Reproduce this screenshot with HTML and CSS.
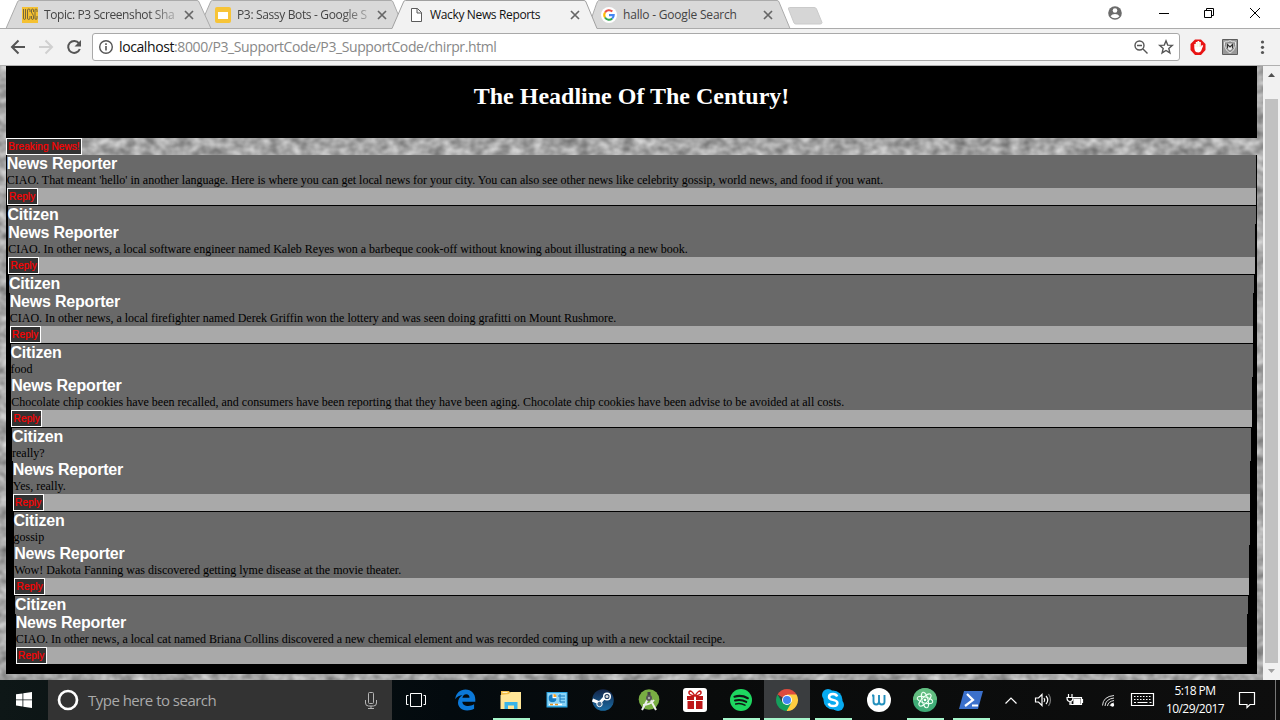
FILE: index.html
```html
<!DOCTYPE html>
<html lang="en">
<head>
<meta charset="utf-8">
<title>Wacky News Reports</title>
<link rel="stylesheet" href="styles.css">
</head>
<body>
<div class="screen">
  <header class="tabstrip">
    <svg class="tab-shapes" width="1280" height="29" viewBox="0 0 1280 29">
      <path d="M0 28.5H1280" stroke="#ababab"/>
      <path d="M585 28.5C590 27 594 9 597.500 1.500Q598 .5 599.500 .5H777Q778.500 .5 779 2L790 28.500Z" fill="#d9d9d9" stroke="#ababab"/>
      <path d="M199 28.500L210.500 2Q211 .5 212.500 .5H391Q392.500 .5 393 2L404 28.500Z" fill="#d9d9d9" stroke="#ababab"/>
      <path d="M6 28.500L17.500 2Q18 .5 19.500 .5H197Q198.500 .5 199 2L211 28.500Z" fill="#d9d9d9" stroke="#ababab"/>
      <path d="M392 28.500L403.500 2Q404 .5 405.500 .5H584Q585.500 .5 586 2L597 28.500" fill="#f2f2f2" stroke="#a0a0a0"/>
      <path d="M392.500 28.500H596.500" stroke="#f2f2f2"/>
      <path d="M789.500 7.500H814Q816 7.500 816.500 9L822 22.500Q822 24 820 24H796Q794.500 24 794 23L788.500 9Q788 7.500 789.500 7.500Z" fill="#d6d6d6" stroke="#cacaca"/>
    </svg>
    <div class="tabs">
      <div class="tab"><svg class="fav" viewBox="0 0 16 16"><path fill="#f5c131" d="M0 0h16v16H0z"/><path d="M1.500 2v9q0 1.500 1 1.500t1-1.500V2M8 5V3q0-1-1.200-1T5.500 3v8q0 1.500 1.200 1.500T8 11V9M11.500 5V3q0-1-1-1t-1 1v2q0 1 1 2t1 3v1q0 1.500-1 1.500t-1-1.500V9M15 5V3q0-1-1-1t-1 1v8q0 1.500 1 1.500t1-1.500V9" fill="none" stroke="#77683a"/></svg><span class="title t1 fade">Topic: P3 Screenshot Sha</span><svg class="close" viewBox="0 0 10 10"><path d="M1 1l8 8M9 1l-8 8"/></svg></div>
      <div class="tab"><svg class="fav" viewBox="0 0 16 16"><rect width="16" height="16" rx="2" fill="#f7c437"/><path fill="#fff" d="M3 5h10v7H3z"/></svg><span class="title t2 fade">P3: Sassy Bots - Google S</span><svg class="close" viewBox="0 0 10 10"><path d="M1 1l8 8M9 1l-8 8"/></svg></div>
      <div class="tab active"><svg class="fav" viewBox="0 0 16 16"><path d="M3.500 1.500h6l4 4v9h-10zM9 1.500V6h4.500" fill="#fff" stroke="#5b5b5b"/></svg><span class="title t3">Wacky News Reports</span><svg class="close" viewBox="0 0 10 10"><path d="M1 1l8 8M9 1l-8 8"/></svg></div>
      <div class="tab"><svg class="fav" viewBox="0 0 16 16"><circle cx="8" cy="8" r="8" fill="#fff"/><g fill="none" stroke-width="2.100"><path d="M4 5.500A4.700 4.700 0 0 1 11.300 4.600" stroke="#ea5245"/><path d="M4 10.500A4.700 4.700 0 0 1 4 5.500" stroke="#fbbc05"/><path d="M11.200 11.500A4.700 4.700 0 0 1 4 10.500" stroke="#34a853"/><path d="M8 8.100h4.700q0 2.200-1.500 3.400" stroke="#4285f4"/></g></svg><span class="title t4">hallo - Google Search</span><svg class="close" viewBox="0 0 10 10"><path d="M1 1l8 8M9 1l-8 8"/></svg></div>
    </div>
    <svg class="winctl" width="180" height="28" viewBox="1100 0 180 28">
      <circle cx="1115" cy="13" r="6.800" fill="#6b6b6b"/><circle cx="1115" cy="10.500" r="2.300" fill="#fff"/><path d="M1110.500 16.200q1.500-2.200 4.500-2.200t4.500 2.200q-1.500 2-4.500 2t-4.500-2z" fill="#fff"/>
      <g fill="none" stroke="#000"><path d="M1159 13.500h10M1204.500 10.500h7v7h-7zM1206.500 10V8.500h7v7H1212M1250 8l10 10M1260 8l-10 10"/></g>
    </svg>
  </header>

  <div class="toolbar">
    <svg width="92" height="36" viewBox="0 29 92 36" fill="none" stroke-width="2">
      <path d="M25 47H12.500M18.500 40.500L12 47l6.500 6.500" stroke="#555"/>
      <path d="M39 47h12.500M45.500 40.500L52 47l-6.500 6.500" stroke="#d0d0d0"/>
      <path d="M79 43.300A6 6 0 1 0 79.800 49" stroke="#555"/><path d="M81 40v6.500h-6.500z" fill="#555"/>
    </svg>
    <div class="omnibox">
      <svg width="16" height="16" viewBox="0 0 16 16"><circle cx="8" cy="8" r="6.300" fill="none" stroke="#555" stroke-width="1.400"/><path d="M7.200 7h1.600v4.500H7.200zM7.200 4.300h1.600V6H7.200z" fill="#555"/></svg>
      <span class="url"><b>localhost</b>:8000/P3_SupportCode/P3_SupportCode/chirpr.html</span>
      <svg class="box-icons" width="44" height="18" viewBox="1132 38 44 18" fill="none" stroke="#555" stroke-width="1.400"><circle cx="1139.500" cy="45.500" r="4.500"/><path d="M1137 45.500h5M1143 49l4.500 4.500M1166 40.800l1.700 4.300 4.600.3-3.500 3 1.100 4.500-3.900-2.400-3.900 2.400 1.100-4.500-3.500-3 4.600-.3z"/></svg>
    </div>
    <svg width="100" height="36" viewBox="1180 29 100 36">
      <path d="M1195 39.500h6l4.500 4.500v6l-4.500 5h-6l-4.500-5v-6z" fill="#e81414"/><path d="M1194.300 48v-4h1.500v-2h1.700v-1h1.700v1h1.600v5l1-2 1.400.5-1.900 5q-.8 2-3 2-3 0-3.500-2z" fill="#fff"/><path d="M1196 43v4M1197.800 42v5M1199.500 42.500V47" stroke="#dda" stroke-width=".4"/>
      <path d="M1222.500 39.500h15v15h-15z" fill="#999" stroke="#5e5e5e"/><path d="M1224.500 42q3.500 0 5.500-1.300 2 1.300 5.500 1.300.8 7.500-5.500 11-6.300-3.500-5.500-11z" fill="#8a8a8a" stroke="#e6e6e6"/><path d="M1226.500 43.500h7v4.500l-3.500 2.500-3.500-2.500z" fill="#ececec"/><path d="M1227.500 48.500v-4l2.500 2.500 2.500-2.500v4" fill="none" stroke="#333" stroke-width="1.200"/>
      <g fill="#555"><circle cx="1262.500" cy="42" r="1.600"/><circle cx="1262.500" cy="47.300" r="1.600"/><circle cx="1262.500" cy="52.500" r="1.600"/></g>
    </svg>
  </div>

  <div class="viewport">
    <main class="page">
      <svg class="texture" width="1263" height="614"><filter id="stone" x="0" y="0" width="100%" height="100%" color-interpolation-filters="sRGB"><feTurbulence type="fractalNoise" baseFrequency=".09 .11" numOctaves="2" seed="5"/><feColorMatrix values=".5 0 0 0 .4 .5 0 0 0 .4 .5 0 0 0 .4 0 0 0 0 1"/></filter><rect width="100%" height="100%" filter="url(#stone)"/></svg>
      <div class="content">
        <h1><span>The Headline Of The Century!</span></h1>
        <button class="breaking">Breaking News!</button>
        <div class="thread">
          <div class="level">
            <div class="post"><h2>News Reporter</h2><p>CIAO. That meant 'hello' in another language. Here is where you can get local news for your city. You can also see other news like celebrity gossip, world news, and food if you want.</p></div>
            <div class="bar"><button>Reply</button></div>
            <div class="level">
              <div class="post"><h2>Citizen</h2></div>
              <div class="level">
                <div class="post"><h2>News Reporter</h2><p>CIAO. In other news, a local software engineer named Kaleb Reyes won a barbeque cook-off without knowing about illustrating a new book.</p></div>
                <div class="bar"><button>Reply</button></div>
                <div class="level">
                  <div class="post"><h2>Citizen</h2></div>
                  <div class="level">
                    <div class="post"><h2>News Reporter</h2><p>CIAO. In other news, a local firefighter named Derek Griffin won the lottery and was seen doing grafitti on Mount Rushmore.</p></div>
                    <div class="bar"><button>Reply</button></div>
                    <div class="level">
                      <div class="post"><h2>Citizen</h2><p>food</p></div>
                      <div class="level">
                        <div class="post"><h2>News Reporter</h2><p>Chocolate chip cookies have been recalled, and consumers have been reporting that they have been aging. Chocolate chip cookies have been advise to be avoided at all costs.</p></div>
                        <div class="bar"><button>Reply</button></div>
                        <div class="level">
                          <div class="post"><h2>Citizen</h2><p>really?</p></div>
                          <div class="level">
                            <div class="post"><h2>News Reporter</h2><p>Yes, really.</p></div>
                            <div class="bar"><button>Reply</button></div>
                            <div class="level">
                              <div class="post"><h2>Citizen</h2><p>gossip</p></div>
                              <div class="level">
                                <div class="post"><h2>News Reporter</h2><p>Wow! Dakota Fanning was discovered getting lyme disease at the movie theater.</p></div>
                                <div class="bar"><button>Reply</button></div>
                                <div class="level">
                                  <div class="post"><h2>Citizen</h2></div>
                                  <div class="level">
                                    <div class="post"><h2>News Reporter</h2><p>CIAO. In other news, a local cat named Briana Collins discovered a new chemical element and was recorded coming up with a new cocktail recipe.</p></div>
                                    <div class="bar"><button>Reply</button></div>
                                  </div>
                                </div>
                              </div>
                            </div>
                          </div>
                        </div>
                      </div>
                    </div>
                  </div>
                </div>
              </div>
            </div>
          </div>
        </div>
      </div>
    </main>
    <div class="scrollbar"><svg width="17" height="33" viewBox="0 0 17 33"><path d="M5 11h7L8.500 7z" fill="#505050"/></svg><div class="thumb"></div><svg width="17" height="17" viewBox="0 0 17 17"><path d="M5 6h7l-3.500 4z" fill="#a0a0a0"/></svg></div>
  </div>

  <footer class="taskbar">
    <div class="start"><svg width="16" height="16" viewBox="0 0 16 16" fill="#fff"><path d="M0 2.300L6.500 1.400V7.500H0zM7.300 1.300L16 0v7.500H7.300zM0 8.300h6.500v6.200L0 13.600zM7.300 8.300H16V16l-8.700-1.300z"/></svg></div>
    <div class="search">
      <svg width="22" height="22" viewBox="0 0 22 22"><circle cx="11" cy="11" r="9" fill="none" stroke="#fff" stroke-width="2.700"/></svg>
      <span>Type here to search</span>
      <svg width="12" height="17" viewBox="0 0 12 17" fill="none" stroke="#b5b5b5"><rect x="3.500" y=".5" width="5" height="11" rx="1"/><path d="M.5 8v3q0 3 3 3h5q3 0 3-3V8M6 14v2.500M3 16.500h6"/></svg>
    </div>
    <div class="apps">
      <div class="app taskview"><svg viewBox="0 0 24 24" fill="none" stroke="#fff"><path d="M6.500 5.500h11v13h-11zM4.500 7.500h-2v9h2M19.500 7.500h2v9h-2"/></svg></div>
      <div class="app"><svg viewBox="0 0 24 24"><path fill="#0b78d8" d="M2.200 11.300C3 5 7 1.500 12.500 1.500c6 0 9.800 4.500 9.800 10v2.200H9.300c.3 3 3 4.300 5.800 4.300 2.300 0 4-.5 6-1.700v4.500c-2 1.100-4 1.700-7 1.700C8 22.500 5 18.500 5 14.800c0-3.300 1.700-6 4.500-7.500C6.500 7.400 4 8.800 2.200 11.300zm7.200-1.500h7.100c0-2.300-1-3.600-3.300-3.600-2.100 0-3.400 1.500-3.800 3.600z"/></svg></div>
      <div class="app open"><svg viewBox="0 0 24 24"><path fill="#f0bd48" d="M2 3h8l1.500 2H22v5H2z"/><path fill="#ffe697" d="M1.500 7L10 6l1.500-2H22v17H1.500z"/><path fill="#fff4c5" d="M3.500 4h5v1h-5z"/><path fill="#38b4e8" d="M5.500 14h13v7H15v-3.500H9V21H5.500z"/></svg></div>
      <div class="app"><svg viewBox="0 0 24 24"><path fill="#2aa4e2" d="M1.500 4h21v15.500h-21z"/><path fill="#8bd5f7" d="M2.500 5h19v13h-19z"/><circle cx="7.500" cy="10.300" r="4" fill="#fff"/><path d="M7.500 10.300V6.300a4 4 0 1 0 4 4z" fill="#147dc2"/><path d="M8.500 9V6q3 0 3 3z" fill="#ffa726"/><path d="M13 8h7M15 6v8M15 11h5M15 14h5" stroke="#1679bc"/><path d="M4 16.500h13" stroke="#fff" stroke-width="1.500"/><path d="M5 16.500h3M10 16.500h3" stroke="#e99520" stroke-width="1.500"/></svg></div>
      <div class="app"><svg viewBox="0 0 24 24"><defs><linearGradient id="steam" x2="0" y2="1"><stop stop-color="#132448"/><stop offset="1" stop-color="#1b6da5"/></linearGradient></defs><circle cx="12" cy="12" r="10.800" fill="url(#steam)"/><path d="M1.500 12l7 3L14 9" fill="none" stroke="#fff" stroke-width="3"/><circle cx="16" cy="8.500" r="3.300" fill="#19375e" stroke="#fff" stroke-width="1.500"/><circle cx="16" cy="8.500" r="1.500" fill="#ddd"/><circle cx="8.500" cy="16" r="2.700" fill="#456c91" stroke="#fff"/></svg></div>
      <div class="app"><svg viewBox="0 0 24 24"><circle cx="12" cy="11.500" r="10.300" fill="#78ad43"/><path d="M12 9L5 22M12 9l7 13M6 17q7 0 11-5" fill="none" stroke="#eee" stroke-width="2"/><path d="M12 4v4" stroke="#444" stroke-width="3"/><circle cx="12" cy="10" r="3" fill="#555"/><circle cx="12" cy="10" r="1.200" fill="#aaa"/></svg></div>
      <div class="app"><svg viewBox="0 0 24 24"><rect width="24" height="24" rx="3" fill="#fff"/><path d="M4 8h7v4H4zM13 8h7v4h-7zM4.500 13H11v8H4.500zM13 13h6.500v8H13z" fill="#bd1719"/><path d="M12 8Q5 7 6 4q2-3 6 4 4-7 6-4 1 3-6 4z" fill="none" stroke="#c61919" stroke-width="1.500"/></svg></div>
      <div class="app open"><svg viewBox="0 0 24 24"><circle cx="12" cy="12" r="11" fill="#1ed760"/><g fill="none" stroke="#101514" stroke-linecap="round"><path d="M5.500 8.700q7-2 13.300 1.500" stroke-width="2.200"/><path d="M6 12.500q6-1.600 11.300 1.400" stroke-width="1.900"/><path d="M6.700 16q5-1.200 9.300 1.200" stroke-width="1.500"/></g></svg></div>
      <div class="app open current"><svg viewBox="0 0 24 24"><path fill="#dd4b3e" d="M12 12L2.500 6.500a11 11 0 0 1 19 0z"/><path fill="#ffcd40" d="M12 12l-.5 11a11 11 0 0 0 10-16.500H12z"/><path fill="#159f5c" d="M2.500 6.500a11 11 0 0 0 9 16.500l5-8.500L12 12l-5 2z"/><circle cx="12" cy="12" r="5" fill="#fff"/><circle cx="12" cy="12" r="4" fill="#4285f4"/></svg></div>
      <div class="app open"><svg viewBox="0 0 24 24"><g fill="#07aaf0"><circle cx="12" cy="12" r="9.500"/><circle cx="7" cy="7" r="6"/><circle cx="17" cy="17" r="6"/></g><path d="M16.200 8.500q-1-2.500-4.200-2.500-4 0-4 2.900 0 2.100 4 3 4.400.9 4.400 3.100 0 3-4.300 3-3.600 0-4.500-2.700" fill="none" stroke="#fff" stroke-width="2.500"/></svg></div>
      <div class="app"><svg viewBox="0 0 24 24"><circle cx="12" cy="12" r="12" fill="#fff"/><path d="M6.500 7v6.500q0 3 2.700 3t2.800-3V7M12 13.500q0 3 2.800 3t2.700-3V7M5 7.500h2" fill="none" stroke="#238fbd" stroke-width="1.900"/></svg></div>
      <div class="app open"><svg viewBox="0 0 24 24"><circle cx="12" cy="12" r="12" fill="#3fac77"/><path d="M0 12a12 12 0 0 1 24 0z" fill="#62bd80"/><g fill="none" stroke="#edfff3"><ellipse cx="12" cy="12" rx="8" ry="3" transform="rotate(15 12 12)"/><ellipse cx="12" cy="12" rx="8" ry="3" transform="rotate(75 12 12)"/><ellipse cx="12" cy="12" rx="8" ry="3" transform="rotate(135 12 12)"/></g><circle cx="12" cy="12" r="1.300" fill="#fff"/></svg></div>
      <div class="app open"><svg viewBox="0 0 24 24"><path d="M5 3h19l-5 18H0z" fill="#3b70cb"/><path d="M8 6l6 6-8 6M13 17.500h6" fill="none" stroke="#fff" stroke-width="2.200"/></svg></div>
    </div>
    <svg class="tray" width="160" height="40" viewBox="1000 680 160 40" fill="none" stroke="#fff" stroke-width="1.200">
      <path d="M1005.500 703.500l5.500-5.500 5.500 5.500"/>
      <path d="M1035.500 698h3l3.500-3.500v11l-3.500-3.500h-3zM1044 698q1.500 2 0 4M1046 696q3.500 4 0 8"/><path d="M1048.500 694q4 6 0 12" stroke="#777"/>
      <path d="M1072.500 697.500h9v7h-10.500v-3"/><path d="M1074 699h6v4.500h-6z" fill="#fff"/><path d="M1082.500 699v4M1068.500 694v3M1072 694v3M1067 697.500h6q0 4-3 4t-3-4zM1070 701v4"/>
      <g stroke="#ddd" stroke-width="1"><path d="M1102.500 705.500q.5-9 11.500-10M1105 706q.5-7 9-8M1107.500 706q.5-4.500 6.500-5.500M1110 706q.5-2.500 4-3"/></g><circle cx="1112.500" cy="705" r="1.700" fill="#fff" stroke="none"/>
      <path d="M1131.500 693.500h22v12h-22z"/><path d="M1134 696.500h18M1134 699.500h18" stroke-dasharray="1.500 1.500"/><path d="M1134 702.500h2M1137.500 702.500h10M1149.500 702.500h2"/>
    </svg>
    <div class="clock"><span class="time">5:18 PM</span><span class="date">10/29/2017</span></div>
    <svg class="notify" width="20" height="20" viewBox="0 0 20 20" fill="none" stroke="#fff" stroke-width="1.200"><path d="M2.500 3.500h15v12H13l-3 3v-3H2.500z"/></svg>
    <div class="peek"></div>
  </footer>
</div>
</body>
</html>
```
FILE: styles.css
```css
* { box-sizing: border-box; }
body { margin: 0; overflow: hidden; background: #fff; }
svg { display: block; flex: none; }
.screen { width: 1280px; height: 720px; display: flex; flex-direction: column; }

.tabstrip { position: relative; height: 29px; display: flex; justify-content: space-between; font: 12px/16px "Open Sans", "Noto Sans", sans-serif; }
.tab-shapes { position: absolute; top: 0; left: 0; }
.tabs { position: relative; display: flex; padding-left: 6px; }
.winctl { position: relative; }
.tab { width: 193px; height: 29px; padding: 1px 5px 0 16px; display: flex; align-items: center; color: #444; }
.active { color: #111; }
.fav { width: 16px; height: 16px; margin-right: 6px; }
.title { flex: 1; min-width: 0; white-space: nowrap; }
.fade { flex: 0 1 134px; -webkit-mask-image: linear-gradient(90deg, #000 105px, rgba(0,0,0,.25) 133px); mask-image: linear-gradient(90deg, #000 105px, rgba(0,0,0,.25) 133px); }
.t1 { letter-spacing: -.4px; }
.t2 { letter-spacing: -.35px; }
.t3 { letter-spacing: -.35px; }
.t4 { letter-spacing: -.2px; }
.close { width: 10px; height: 10px; margin-left: auto; fill: none; stroke: #666; stroke-width: 1.7; }

.toolbar { height: 37px; background: #f2f2f2; border-bottom: 1px solid #b0b0b0; display: flex; }
.omnibox { width: 1088px; height: 28px; margin-top: 4px; padding: 0 3px 0 5px; border: 1px solid #a9a9a9; border-radius: 3px; background: #fff; display: flex; align-items: center; font: 14px/20px "Open Sans", "Noto Sans", sans-serif; color: #888; }
.url { margin-left: 5px; letter-spacing: -.4px; }
.url b { font-weight: 400; color: #111; }
.box-icons { margin-left: auto; }

.viewport { height: 614px; display: flex; }
.page { position: relative; width: 1263px; height: 614px; padding: 0 6px; overflow: hidden; background: #a5a5a5; }
.texture { position: absolute; top: 0; left: 0; }
.content { position: relative; }
h1, h2, p { margin: 0; }
h1 { height: 72px; padding-top: 16px; background: #000; color: #fff; font: bold 24px/28px "Liberation Serif", serif; text-align: center; }
button { display: block; height: 17px; padding: 0; border: 1px solid #fff; border-radius: 0; background: #333; color: #f00; font: 10px/15px "Liberation Sans", sans-serif; text-align: center; white-space: nowrap; -webkit-text-stroke: .2px #f00; }
.breaking { width: 76px; letter-spacing: .1px; }
.thread { height: 519px; background: #000; }
.level { padding: 0 .75px; }
.bar + .level { margin-top: 1px; }
.post { background: #696969; color: #000; }
.post h2 { height: 18px; color: #fff; font: bold 16px/18px "Liberation Sans", sans-serif; letter-spacing: -.2px; }
.post p { height: 15px; font: 12px/15px "Liberation Serif", serif; white-space: nowrap; }
.bar { height: 17px; background: #a9a9a9; }
.bar button { width: 31px; letter-spacing: .15px; }
.scrollbar { width: 17px; background: #f1f1f1; display: flex; flex-direction: column; }
.thumb { flex: 1; margin: 0 2px; background: #c1c1c1; }

.taskbar { height: 40px; display: flex; background: linear-gradient(90deg, #0e1717, #030a0e 35%, #090b0b 55%, #0e0e0e); color: #fff; font-family: "Open Sans", "Noto Sans", sans-serif; }
.start { width: 48px; display: flex; align-items: center; justify-content: center; }
.search { width: 344px; padding: 0 15px 0 9px; background: #333; display: flex; align-items: center; gap: 9px; font-size: 15px; line-height: 20px; color: #aaa; letter-spacing: -.52px; }
.search span { flex: 1; }
.apps { display: flex; }
.app { width: 46px; height: 40px; padding-top: 8px; display: flex; justify-content: center; }
.taskview { width: 50px; padding-right: 2px; }
.app svg { width: 24px; height: 24px; }
.open { background: linear-gradient(#a6f5cb, #a6f5cb) center bottom / 37px 2px no-repeat; }
.current { background: linear-gradient(#a6f5cb, #a6f5cb) center bottom / 46px 2px no-repeat, #3a3d3f; }
.tray { margin-left: 6px; }
.clock { width: 70px; display: flex; flex-direction: column; align-items: center; padding-top: 2px; font-size: 12px; line-height: 18px; }
.clock span { letter-spacing: -.55px; white-space: nowrap; }
.notify { margin: 9px 0 0 7px; }
.peek { margin-left: auto; width: 5px; border-left: 1px solid #777; }
```
